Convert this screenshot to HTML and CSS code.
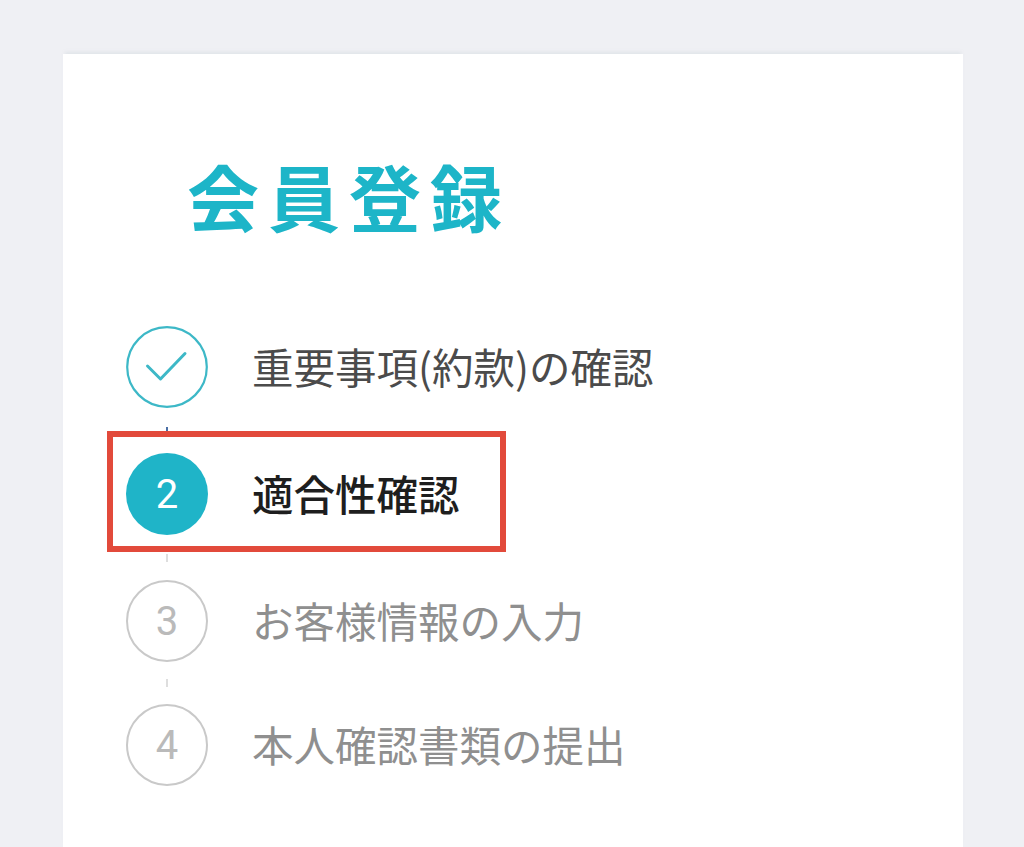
FILE: index.html
```html
<!DOCTYPE html>
<html lang="ja">
<head>
<meta charset="utf-8">
<title>会員登録</title>
<link rel="stylesheet" href="styles.css">
</head>
<body>
<main class="card">
  <h1 class="title">会員登録</h1>
  <ol class="steps">
    <li class="step done">
      <span class="badge">
        <svg viewBox="0 0 82 82" width="82" height="82" aria-hidden="true">
          <circle cx="41" cy="41" r="39.8" fill="none" stroke="#3db8c7" stroke-width="2.2"/>
          <path d="M21.5 40 L34.5 53 L59 27.5" fill="none" stroke="#3db8c7" stroke-width="3" stroke-linecap="round" stroke-linejoin="round"/>
        </svg>
      </span>
      <span class="label">重要事項(約款)の確認</span>
    </li>
    <li class="connector first"></li>
    <li class="step current">
      <span class="badge">2</span>
      <span class="label">適合性確認</span>
      <span class="highlight"></span>
    </li>
    <li class="connector"></li>
    <li class="step todo">
      <span class="badge">3</span>
      <span class="label">お客様情報の入力</span>
    </li>
    <li class="connector last"></li>
    <li class="step todo">
      <span class="badge">4</span>
      <span class="label">本人確認書類の提出</span>
    </li>
  </ol>
</main>
</body>
</html>
```

FILE: styles.css
```css
html, body {
  margin: 0;
  padding: 0;
  background: #eff0f4;
  height: 100%;
  overflow: hidden;
}

body {
  font-family: "Noto Sans CJK JP", "Noto Sans", sans-serif;
}

.card {
  margin: 54px 0 0 63px;
  width: 900px;
  height: 793px;
  background: #ffffff;
  box-shadow: 0 -4px 3px -2px rgba(200, 210, 215, 0.35);
  padding: 103px 0 0 63px;
  box-sizing: border-box;
}

.title {
  margin: 0 0 0 61px;
  font-size: 72px;
  line-height: 76px;
  font-weight: 700;
  color: #1db5c8;
  letter-spacing: 9px;
}

.steps {
  list-style: none;
  margin: 93px 0 0 0;
  padding: 0;
  display: flex;
  flex-direction: column;
  align-items: flex-start;
}

.step {
  position: relative;
  display: flex;
  align-items: center;
  height: 82px;
}

.badge {
  width: 82px;
  height: 82px;
  box-sizing: border-box;
  border-radius: 50%;
  display: flex;
  align-items: center;
  justify-content: center;
  font-family: Roboto, "Liberation Sans", sans-serif;
  font-size: 40px;
  flex: none;
}

.badge svg {
  display: block;
}

.label {
  margin-left: 44px;
  font-size: 41.5px;
  line-height: 1;
  white-space: nowrap;
}

.done .label {
  color: #4b4b4b;
}

.current .badge {
  background: #1fb4c8;
  color: #ffffff;
  font-weight: 400;
}

.current .label {
  color: #1e1e1e;
  font-weight: 500;
}

.todo .badge {
  border: 2px solid #c9c9c9;
  color: #bababa;
  font-weight: 400;
}

.todo .label {
  color: #8f8f8f;
}

.connector {
  height: 45px;
  width: 82px;
  display: flex;
  align-items: center;
  justify-content: center;
}

.connector.last {
  height: 42px;
}

.connector::before {
  content: "";
  display: block;
  width: 2px;
  height: 8px;
  background: #dedede;
}

.connector.first::before {
  background: #4a6fa5;
}

.highlight {
  position: absolute;
  left: -19px;
  top: -22px;
  width: 399px;
  height: 121px;
  box-sizing: border-box;
  border: 6px solid #e24a3b;
  pointer-events: none;
}
```
